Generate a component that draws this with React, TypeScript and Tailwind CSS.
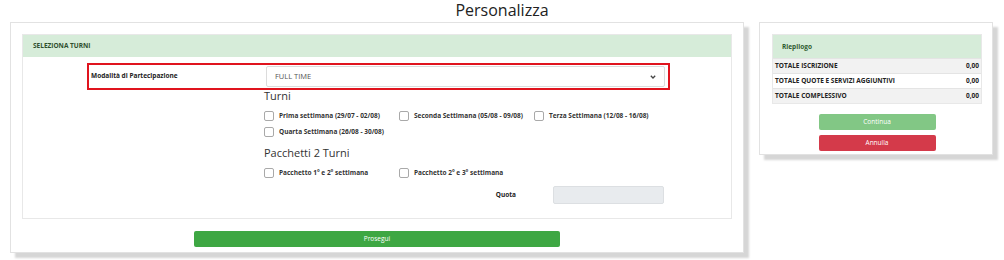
import React from 'react';

const turni = [
  'Prima settimana (29/07 - 02/08)',
  'Seconda Settimana (05/08 - 09/08)',
  'Terza Settimana (12/08 - 16/08)',
  'Quarta Settimana (26/08 - 30/08)',
];

const pacchetti = ['Pacchetto 1° e 2° settimana', 'Pacchetto 2° e 3° settimana'];

const riepilogo = [
  { label: 'TOTALE ISCRIZIONE', value: '0,00' },
  { label: 'TOTALE QUOTE E SERVIZI AGGIUNTIVI', value: '0,00' },
  { label: 'TOTALE COMPLESSIVO', value: '0,00' },
];

const CheckItem: React.FC<{ label: string }> = ({ label }) => (
  <label className="flex items-center h-[16px]">
    <span className="w-[10px] h-[10px] border border-[#a9a9a9] rounded-[2px] bg-white shrink-0" />
    <span className="ml-[5px] text-[6.5px] font-bold text-[#333] whitespace-nowrap">{label}</span>
  </label>
);

export default function App() {
  return (
    <div className="w-[1004px] h-[260px] bg-white font-['Open_Sans',sans-serif] text-[#333] overflow-hidden">
      {/* Title */}
      <h1 className="h-[22px] text-center text-[16px] leading-[20px] text-[#222]">Personalizza</h1>

      <div className="flex items-start pl-[10px] gap-[15px]">
        {/* Left card */}
        <div className="w-[734px] bg-white border border-[#e2e2e2] shadow-[5px_5px_2px_#d6d6d6] pt-[11px] px-[11px] pb-[5px]">
          <div className="border border-[#e8e8e8]">
            <div className="h-[22px] bg-[#d6ecd9] flex items-center px-[10px]">
              <span className="text-[6.5px] font-bold text-[#2f4f2f]">SELEZIONA TURNI</span>
            </div>
            <div className="pt-[6px] pb-[14px]">
              {/* Modalità row */}
              <div className="ml-[64px] w-[583px] h-[27px] border-2 border-[#e0141e] flex items-center pl-[2px] pr-[3px]">
                <span className="w-[175px] text-[6.5px] font-bold text-[#222] -mt-[2px]">Modalità di Partecipazione</span>
                <div className="flex-1 h-[21px] border border-[#dcdcdc] rounded-[2px] flex items-center justify-between px-[8px]">
                  <span className="text-[7.5px] text-[#555]">FULL TIME</span>
                  <svg width="6" height="4" viewBox="0 0 6 4">
                    <path d="M0.8 0.8 L3 3 L5.2 0.8" fill="none" stroke="#444" strokeWidth="1.3" />
                  </svg>
                </div>
              </div>

              <div className="ml-[241px] w-[400px]">
                <div className="text-[11px] leading-[12px] text-[#333]">Turni</div>
                <div className="grid grid-cols-[135px_135px_135px] mt-[6px]">
                  {turni.map((t) => (
                    <CheckItem key={t} label={t} />
                  ))}
                </div>
                <div className="text-[11px] leading-[12px] mt-[7px] text-[#333]">Pacchetti 2 Turni</div>
                <div className="grid grid-cols-[135px_135px] mt-[6px]">
                  {pacchetti.map((p) => (
                    <CheckItem key={p} label={p} />
                  ))}
                </div>
                <div className="flex items-center justify-end mt-[5px]">
                  <span className="text-[6.5px] font-bold text-[#222] mr-[37px]">Quota</span>
                  <div className="w-[111px] h-[18px] bg-[#e8ebee] border border-[#dcdfe2] rounded-[2px]" />
                </div>
              </div>
            </div>
          </div>

          <div className="flex justify-center mt-[12px]">
            <button className="w-[366px] h-[16px] bg-[#3ea743] rounded-[2px] text-white text-[6.5px]">Prosegui</button>
          </div>
        </div>

        {/* Right card */}
        <div className="w-[234px] bg-white border border-[#e2e2e2] shadow-[5px_5px_2px_#d6d6d6] pt-[11px] pl-[12px] pr-[10px] pb-[3px]">
          <div className="border border-[#e8e8e8]">
            <div className="h-[23px] bg-[#d6ecd9] flex items-center px-[9px]">
              <span className="text-[6.5px] font-bold text-[#2f5a2f]">Riepilogo</span>
            </div>
            {riepilogo.map((r, i) => (
              <div
                key={r.label}
                className={`h-[15px] flex items-center justify-between px-[2px] border-t border-[#e4e4e4] ${
                  i % 2 === 0 ? 'bg-[#f2f2f2]' : 'bg-white'
                }`}
              >
                <span className="text-[6.5px] font-bold text-[#222]">{r.label}</span>
                <span className="text-[6.5px] font-bold text-[#222]">{r.value}</span>
              </div>
            ))}
          </div>
          <div className="flex flex-col items-center mt-[10px] gap-[5px]">
            <button className="w-[117px] h-[16px] bg-[#82c785] rounded-[2px] text-white text-[6.5px]">Continua</button>
            <button className="w-[117px] h-[16px] bg-[#d43a4a] rounded-[2px] text-white text-[6.5px]">Annulla</button>
          </div>
        </div>
      </div>
    </div>
  );
}
